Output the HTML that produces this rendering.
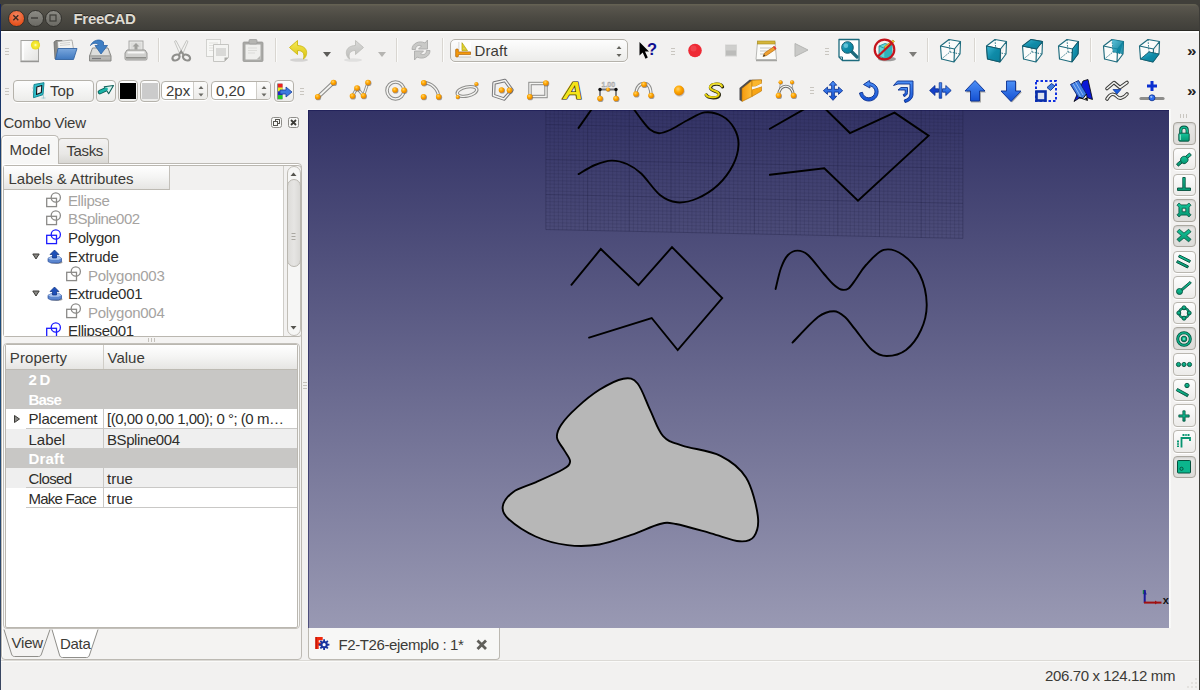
<!DOCTYPE html>
<html><head><meta charset="utf-8"><title>FreeCAD</title>
<style>
*{box-sizing:border-box;margin:0;padding:0}
html,body{width:1200px;height:690px;overflow:hidden;background:#f2f1f0;font-family:"Liberation Sans",sans-serif;font-size:15px;color:#3c3b37}
.a{position:absolute}
.t{position:absolute;white-space:pre;line-height:18px;height:18px}
svg{position:absolute;overflow:visible}
#title{left:0;top:0;width:1200px;height:31px;background:#403f3a}
#titlein{left:1px;top:4px;width:1198px;height:27px;border-radius:5px 5px 0 0;background:linear-gradient(#646153 0,#646153 1px,#5a574e 2px,#4b4942 14px,#403f3a 25.500px,#2a2924 26.500px,#2a2924 27px)}
#leftedge{left:0;top:4px;width:1px;height:686px;background:linear-gradient(#14245a,#1c4a7a 30%,#1c4a7a 60%,#3a4660)}
#view{left:308px;top:110px;width:861px;height:518px;background:linear-gradient(#333366,#9999b3);overflow:hidden;box-shadow:inset 1px 1px 0 rgba(20,20,80,.55)}
.wb{position:absolute;top:9.7px;width:17px;height:17px;border-radius:50%;border:1px solid #33322e}
.btn{position:absolute;border:1px solid #b5b2ab;border-radius:4px;background:linear-gradient(#fdfdfd,#ececea);box-shadow:0 1px 0 #fff}
.sep{position:absolute;width:1px;height:24px;top:38px;background:#d9d6d1;border-right:1px solid #fbfbfa;box-sizing:content-box}
.hd{position:absolute;width:4px;height:7px;background:repeating-linear-gradient(#c9c6c0 0 1px,transparent 1px 3px)}
.gray{color:#a5a4a2}
.gl{position:absolute;height:1px;background:#c9c8c6}
</style></head><body>
<!-- TITLE -->
<div class="a" id="title"></div>
<div class="a" id="titlein"></div>
<div class="wb" style="left:7.800px;background:radial-gradient(circle at 50% 30%,#f58662,#e8541f 70%,#d44c1b)"></div>
<div class="wb" style="left:26.500px;background:linear-gradient(#8c8b85,#6a6963)"></div>
<div class="wb" style="left:45px;background:linear-gradient(#8c8b85,#6a6963)"></div>
<svg style="left:8.300px;top:10.400px" width="56" height="16" viewBox="0 0 56 16">
<path d="M5.3 5.3l5 5m0-5l-5 5" stroke="#3b2a22" stroke-width="1.4" fill="none"/>
<path d="M23 8h7" stroke="#3d3c38" stroke-width="1.4"/>
<rect x="42" y="5" width="6" height="6" fill="#7d7c76" stroke="#3d3c38" stroke-width="1.2"/>
</svg>
<div class="t" style="left:73.500px;top:10px;color:#dfdbd2;font-weight:bold;text-shadow:0 -1px 0 #2a2926;letter-spacing:-0.312px">FreeCAD</div>
<div class="a" style="left:1px;top:31px;width:1198px;height:2px;background:linear-gradient(#fff,#fbfbfa)"></div>
<!--TB1S-->
<svg width="0" height="0" style="left:0;top:0"><defs>
<linearGradient id="gPaper" x1="0" y1="0" x2="1" y2="1"><stop offset="0" stop-color="#fff"/><stop offset="1" stop-color="#e3e3e1"/></linearGradient>
<radialGradient id="gGlow"><stop offset="0" stop-color="#fffde0"/><stop offset=".35" stop-color="#f8ee3a"/><stop offset="1" stop-color="#e8d81c"/></radialGradient>
<linearGradient id="gFold" x1="0" y1="0" x2="0" y2="1"><stop offset="0" stop-color="#7aa7dd"/><stop offset="1" stop-color="#3f78bf"/></linearGradient>
<linearGradient id="gDrive" x1="0" y1="0" x2="0" y2="1"><stop offset="0" stop-color="#e9e9e7"/><stop offset="1" stop-color="#a9a9a6"/></linearGradient>
<linearGradient id="gYel" x1="0" y1="0" x2="0" y2="1"><stop offset="0" stop-color="#f6ea55"/><stop offset="1" stop-color="#d9c211"/></linearGradient>
<linearGradient id="gGry" x1="0" y1="0" x2="0" y2="1"><stop offset="0" stop-color="#d9d9d7"/><stop offset="1" stop-color="#bdbdbb"/></linearGradient>
<radialGradient id="gOr" cx=".4" cy=".35" r=".7"><stop offset="0" stop-color="#ffd070"/><stop offset=".45" stop-color="#ffa900"/><stop offset="1" stop-color="#e07b00"/></radialGradient>
<linearGradient id="gTeal" x1="0" y1="0" x2="1" y2="1"><stop offset="0" stop-color="#3fb6d3"/><stop offset=".5" stop-color="#0f8ba8"/><stop offset="1" stop-color="#0a7f9b"/></linearGradient>
<linearGradient id="gBlue" x1="0" y1="0" x2="0" y2="1"><stop offset="0" stop-color="#4d90f6"/><stop offset="1" stop-color="#1450d2"/></linearGradient>
<linearGradient id="gGreen" x1="0" y1="0" x2="0" y2="1"><stop offset="0" stop-color="#14c59a"/><stop offset="1" stop-color="#069571"/></linearGradient>
<g id="od"><circle r="2.900" cx=".6" cy=".7" fill="#5a5a58" opacity=".55"/><circle r="2.800" fill="url(#gOr)"/></g>
<g id="ods"><circle r="2.1" cx=".4" cy=".5" fill="#5a5a58" opacity=".5"/><circle r="2" fill="url(#gOr)"/></g>
<g id="cube"><path d="M2.5 8L16.5 11L16 24L3.5 21ZM2.5 8L11 1.5L22.5 3.5L16.5 11M22.5 3.5L22 16L16 24" fill="#fff" fill-opacity=".75" stroke="#1d6b7d" stroke-width="1.150" stroke-linejoin="round"/><path d="M11 1.5L12 14L3.5 21M12 14L22 16" fill="none" stroke="#1d6b7d" stroke-width=".9" stroke-dasharray="1.6 1.2"/></g>
</defs></svg>
<div class="hd" style="left:5px;top:48px"></div>
<!-- new -->
<svg style="left:17px;top:38px" width="24" height="24" viewBox="0 0 24 24"><rect x="4" y="2.5" width="17.5" height="20.5" fill="url(#gPaper)" stroke="#a3a3a0" stroke-width="1"/><path d="M3.5 23.7h18.5" stroke="#8c8c89" stroke-width="1"/><path d="M6 4v18" stroke="#fff" stroke-width="1.5"/><circle cx="18.5" cy="7" r="4.6" fill="url(#gGlow)"/></svg>
<!-- open -->
<svg style="left:53px;top:38px" width="24" height="24" viewBox="0 0 24 24"><path d="M1 4l2-1.5h6l1.5 1.5H19v17H2z" fill="#8b8b88" stroke="#6b6b68" stroke-width=".8"/><path d="M4.5 3.5l14.5-1.5l1.5 9H5z" fill="#f3f3f1" stroke="#9b9b98" stroke-width=".7"/><path d="M7 5.5l10-1M7 7.5l10-1" stroke="#c9c9c6" stroke-width=".8"/><path d="M2.5 21.5L5 10.5h19L20.5 21.5z" fill="url(#gFold)" stroke="#3465a4" stroke-width=".9" stroke-linejoin="round"/></svg>
<!-- save -->
<svg style="left:88px;top:38px" width="24" height="24" viewBox="0 0 24 24"><path d="M4.5 10h15.5l3 8v5H1.500v-5z" fill="url(#gDrive)" stroke="#8a8a87" stroke-width="1" stroke-linejoin="round"/><path d="M1.500 18h21.5" stroke="#8f8f8c" stroke-width=".8"/><path d="M4 20.500h9" stroke="#77777a" stroke-width="1.200"/><path d="M5.500 11h13.500l2 6h-17.500z" fill="#dededc"/><path d="M2.500 7.500c2-5 9-7.500 13-3.500l0 3.500h4l-6.500 8.500l-6-8.500h3.500c-1-3-5.500-3-8 0z" fill="#3f7fc4" stroke="#2b62a3" stroke-width=".8" stroke-linejoin="round"/></svg>
<!-- print -->
<svg style="left:124px;top:38px" width="24" height="24" viewBox="0 0 24 24"><rect x="5" y="3" width="14" height="10" fill="#ececea" stroke="#a3a3a0" stroke-width=".9"/><rect x="6.500" y="4.500" width="11" height="7" fill="#dcdcda"/><path d="M12 5l3.500 3.500h-2v3h-3v-3h-2z" fill="#9f9f9c"/><path d="M3 12h18l2 3v5.500c0 1-.5 1.500-1.500 1.500h-19c-1 0-1.500-.5-1.500-1.500v-5.500z" fill="#cfcfcd" stroke="#8f8f8c" stroke-width=".9" stroke-linejoin="round"/><path d="M3.500 14.500h17" stroke="#f7f7f6" stroke-width="2"/><path d="M2 19.800h20" stroke="#8f8f8c" stroke-width="1.600"/></svg>
<div class="sep" style="left:158px"></div>
<!-- cut -->
<svg style="left:169px;top:38px" width="24" height="24" viewBox="0 0 24 24"><path d="M7 2.500l6 11.500-2 2.500-5.500-13z" fill="#f3f3f1" stroke="#b9b9b6" stroke-width=".8"/><path d="M17.500 2.500l-6 11.500 2 2.500 5.500-13z" fill="#f3f3f1" stroke="#b9b9b6" stroke-width=".8"/><ellipse cx="7" cy="19.500" rx="3.800" ry="2.700" transform="rotate(-30 7 19.500)" fill="none" stroke="#8f8f8c" stroke-width="2.200"/><ellipse cx="17.500" cy="19.500" rx="3.800" ry="2.700" transform="rotate(30 17.500 19.500)" fill="none" stroke="#8f8f8c" stroke-width="2.200"/><path d="M10 16.500l2.200-3 2.200 3" stroke="#8f8f8c" stroke-width="2" fill="none"/></svg>
<!-- copy -->
<svg style="left:205px;top:38px" width="24" height="24" viewBox="0 0 24 24"><rect x="1.500" y="1.500" width="14" height="17" fill="#f7f7f5" stroke="#cfcfcc" stroke-width=".9"/><path d="M4 5h9M4 7.500h9M4 10h9M4 12.500h9" stroke="#dededb" stroke-width=".9"/><path d="M8.500 6.500h15v13l-4 4h-11z" fill="#f4f4f2" stroke="#bfbfbc" stroke-width=".9"/><rect x="11" y="10" width="10" height="8" fill="#d9d9d7"/><path d="M23.500 19.500h-4v4z" fill="#a9a9a6"/></svg>
<!-- paste -->
<svg style="left:241px;top:38px" width="24" height="24" viewBox="0 0 24 24"><rect x="2" y="4" width="20" height="19.500" rx="1" fill="#a9a9a6" stroke="#9a9a97" stroke-width=".8"/><rect x="4.500" y="6.500" width="15" height="15" fill="#efefed"/><rect x="8" y="1.500" width="8" height="4.500" rx="1" fill="#b5b5b2" stroke="#99999a" stroke-width=".7"/><path d="M7 10h9M7 12.500h9M7 15h7" stroke="#dcdcd9" stroke-width="1.200"/><path d="M19.500 17.500v4h-4z" fill="#b9b9b6"/></svg>
<div class="sep" style="left:275px"></div>
<!-- undo -->
<svg style="left:288px;top:38px" width="24" height="24" viewBox="0 0 24 24"><ellipse cx="11" cy="22" rx="9" ry="1.800" fill="#000" opacity=".12"/><path d="M9.500 2.500L1.500 9.500l8 7v-4c5 0 7.500 2.500 6 8.500 4.500-3 5.500-13-6-13.500z" fill="url(#gYel)" stroke="#cdb80e" stroke-width=".9" stroke-linejoin="round"/></svg>
<svg style="left:322px;top:50.500px" width="10" height="7" viewBox="0 0 10 7"><path d="M1 1h8l-4 5z" fill="#5d5c59"/></svg>
<!-- redo -->
<svg style="left:341px;top:38px" width="24" height="24" viewBox="0 0 24 24"><ellipse cx="12" cy="22" rx="9" ry="1.800" fill="#000" opacity=".07"/><path d="M14.500 2.500l8 7-8 7v-4c-5 0-7.500 2.500-6 8.500-4.500-3-5.500-13 6-13.500z" fill="url(#gGry)" stroke="#bdbdba" stroke-width=".9" stroke-linejoin="round"/></svg>
<svg style="left:377px;top:51px" width="10" height="7" viewBox="0 0 10 7"><path d="M1 1h8l-4 5z" fill="#b5b4b1"/></svg>
<div class="sep" style="left:396px"></div>
<!-- refresh -->
<svg style="left:408.700px;top:38px" width="24" height="24" viewBox="0 0 24 24"><path d="M3 11.500c0-6 7-9.500 13-6.500l2.500-3v9h-9l3-3c-3-1.500-6 0-6 3.500z" fill="#c9c9c7" stroke="#adadab" stroke-width=".9" stroke-linejoin="round"/><path d="M21 12.500c0 6-7 9.500-13 6.500l-2.500 3v-9h9l-3 3c3 1.500 6 0 6-3.500z" fill="#c9c9c7" stroke="#adadab" stroke-width=".9" stroke-linejoin="round"/></svg>
<div class="sep" style="left:442px"></div>
<!-- combo -->
<div class="btn" style="left:449.500px;top:39px;width:178.500px;height:22.500px;border-radius:5px"></div>
<svg style="left:455px;top:41px" width="17" height="17" viewBox="0 0 17 17"><rect x="3.400" y="1" width="12.600" height="15.300" fill="#fff"/><path d="M3.900 1v9" stroke="#c9c9c7" stroke-width=".8"/><path d="M3.400 16h12.600" stroke="#b5b5b3" stroke-width=".8"/><path d="M7 1.700v8h5.500z" fill="#f2e12a" stroke="#a89a0a" stroke-width=".7" stroke-linejoin="round"/><path d="M8.300 5.500v3h2z" fill="#fbf7b0" stroke="#a89a0a" stroke-width=".4"/><path d="M.7 8.500c0-.6 2.600-.6 2.600 0v2.400h12.200v2.700h-12.200v1.900c0 .6-2.600.6-2.600 0z" fill="#f59a0c" stroke="#a85f04" stroke-width=".7" stroke-linejoin="round"/></svg>
<div class="t" style="left:474.500px;top:42px;color:#3c3b37;letter-spacing:0.097px">Draft</div>
<svg style="left:615px;top:44px" width="8" height="14" viewBox="0 0 8 14"><path d="M1.500 5l2.500-3 2.500 3zM1.500 10l2.500 3 2.500-3z" fill="#66655f"/></svg>
<!-- whatsthis -->
<svg style="left:637px;top:40px" width="22" height="22" viewBox="0 0 22 22"><path d="M2.500 2l9.500 9.500h-4l2.800 6-2.300 1.200-2.800-6.200-3.200 3z" fill="#000"/><text x="10" y="14.500" font-family="Liberation Sans,sans-serif" font-weight="bold" font-size="16.500" fill="#101090">?</text></svg>
<div class="hd" style="left:671px;top:48px"></div>
<!-- record -->
<svg style="left:683px;top:38px" width="24" height="24" viewBox="0 0 24 24"><circle cx="12" cy="12.500" r="6.800" fill="#ee2a35"/><circle cx="10.500" cy="10.500" r="3" fill="#f4545c" opacity=".6"/></svg>
<!-- stop -->
<svg style="left:719px;top:38px" width="24" height="24" viewBox="0 0 24 24"><rect x="6.500" y="7" width="11" height="11" fill="#bcbcba" stroke="#d5d5d3" stroke-width="1"/><path d="M7 7.500h10v5h-10z" fill="#cfcfcd"/></svg>
<!-- edit macro -->
<svg style="left:754px;top:38px" width="24" height="24" viewBox="0 0 24 24"><path d="M2 22.500h21" stroke="#a5a5a2" stroke-width="1.500"/><path d="M3.500 4h17.500l1.500 17.500h-20.500z" fill="#fbfbf9" stroke="#b1b1ae" stroke-width=".9"/><rect x="3.500" y="3" width="17.500" height="3" fill="#d5b53a" stroke="#a68a1a" stroke-width=".6"/><path d="M6 10h11M6 13h8M6 16h6" stroke="#c5c5c2" stroke-width="1"/><path d="M9 18.500l1.500-3.500 9.500-6.500 2 2.500-9.500 6.500z" fill="#f0a030" stroke="#b06a10" stroke-width=".7"/><path d="M19 9l1.500-1 2 2.500-1.500 1z" fill="#e23b3b"/><path d="M9 18.500l1-2.200 1.300 1.600z" fill="#333"/></svg>
<!-- play -->
<svg style="left:789px;top:38px" width="24" height="24" viewBox="0 0 24 24"><path d="M6 5.500l13 6.500-13 6.500z" fill="#c9c9c7" stroke="#b5b5b3" stroke-width="1" stroke-linejoin="round"/></svg>
<div class="hd" style="left:825px;top:48px"></div>
<!-- zoom fit -->
<svg style="left:837px;top:38px" width="24" height="24" viewBox="0 0 24 24"><path d="M2 1.500h20v21h-16.500l-3.500-3.500z" fill="#fff" stroke="#1d6b7d" stroke-width="1.300" stroke-linejoin="round"/><path d="M2 19h3.500v3.500" fill="none" stroke="#1d6b7d" stroke-width="1"/><path d="M14.500 13.500l5.500 5.500" stroke="#1d6b7d" stroke-width="3.200" stroke-linecap="round"/><circle cx="10.500" cy="9.500" r="5.800" fill="url(#gTeal)" stroke="#14596a" stroke-width="1"/><circle cx="9" cy="7.800" r="2.200" fill="#7fd3e6" opacity=".7"/></svg>
<!-- no draw style -->
<svg style="left:873px;top:38px" width="24" height="24" viewBox="0 0 24 24"><ellipse cx="14" cy="21" rx="9" ry="2.300" fill="#000" opacity=".35"/><path d="M6 8l6-2.500 7 2v10l-7 3-6-2.500z" fill="#5fd6d6" stroke="#1d8a93" stroke-width=".8"/><path d="M6 8l6 2.500 7-3M12 10.500v10" stroke="#1d8a93" stroke-width=".8" fill="none"/><path d="M12 10.500l7-3v10l-7 3z" fill="#2fb3bb"/><path d="M11 9l9-7 1.500 1.500-8.500 7.500z" fill="#f3c530" stroke="#a8820a" stroke-width=".6"/><circle cx="11.500" cy="11.500" r="9.800" fill="none" stroke="#c4141c" stroke-width="2.200"/><path d="M4.800 18.500l14-13.500" stroke="#c4141c" stroke-width="2.200"/></svg>
<svg style="left:908px;top:51px" width="10" height="7" viewBox="0 0 10 7"><path d="M1 1h8l-4 5z" fill="#7d7c79"/></svg>
<div class="sep" style="left:927px"></div>
<!-- cubes -->
<svg style="left:938px;top:38px" width="24" height="24" viewBox="0 0 24 24"><use href="#cube"/></svg>
<div class="sep" style="left:974px"></div>
<svg style="left:984px;top:38px" width="24" height="24" viewBox="0 0 24 24"><use href="#cube"/><path d="M2.500 8L16.500 11L16 24L3.500 21Z" fill="url(#gTeal)" stroke="#14596a" stroke-width="1"/></svg>
<svg style="left:1020px;top:38px" width="24" height="24" viewBox="0 0 24 24"><use href="#cube"/><path d="M2.500 8L11 1.500L22.500 3.500L16.500 11Z" fill="url(#gTeal)" stroke="#14596a" stroke-width="1"/></svg>
<svg style="left:1056px;top:38px" width="24" height="24" viewBox="0 0 24 24"><use href="#cube"/><path d="M16.500 11L22.500 3.500L22 16L16 24Z" fill="url(#gTeal)" stroke="#14596a" stroke-width="1"/></svg>
<div class="sep" style="left:1090px"></div>
<svg style="left:1101px;top:38px" width="24" height="24" viewBox="0 0 24 24"><path d="M11 1.500L22.500 3.500L22 16L12 14Z" fill="url(#gTeal)"/><use href="#cube"/><path d="M11 1.500L22.500 3.500L22 16L12 14Z" fill="url(#gTeal)" opacity=".8"/></svg>
<svg style="left:1137px;top:38px" width="24" height="24" viewBox="0 0 24 24"><use href="#cube"/><path d="M3.500 21L12 14L22 16L16 24Z" fill="url(#gTeal)" stroke="#14596a" stroke-width=".8"/></svg>
<div class="t" style="left:1187px;top:43px;font-size:17px;font-weight:bold;color:#222;letter-spacing:-1px;transform:scale(1,.85)">»</div>
<!--TB1E-->
<!--TB2S-->
<div class="hd" style="left:5px;top:88px"></div>
<div class="btn" style="left:13px;top:79.500px;width:81px;height:22px"></div>
<svg style="left:31px;top:80px" width="17" height="20" viewBox="0 0 17 20"><path d="M3 4.500l10-1.800-1 12-9.500 3z" fill="#2fbfca" stroke="#1a8792" stroke-width="1" stroke-linejoin="round"/><path d="M5.800 7l5-1.500-.5 7-4.800 2z" fill="#f2f1f0" stroke="#15151a" stroke-width="1.100" stroke-linejoin="round"/><path d="M1 8h1.500M1 12h1.500M12.500 15v3.500M10.500 18h4" stroke="#8cc4cb" stroke-width=".7"/></svg>
<div class="t" style="left:50px;top:81.500px;color:#3c3b37">Top</div>
<div class="btn" style="left:96px;top:79.500px;width:20px;height:22px"></div>
<svg style="left:97px;top:83px" width="18" height="14" viewBox="0 0 18 14"><path d="M3 9L8.500 6.500" stroke="#0c5f58" stroke-width="4.600" stroke-linecap="round"/><path d="M7.300 3.700l9.200-1.200-4.800 8.200z" fill="#d9f2ee" stroke="#0c5f58" stroke-width="1.100" stroke-linejoin="round"/><path d="M3 9L9.500 6" stroke="#19b3a6" stroke-width="2.800" stroke-linecap="round"/></svg>
<div class="btn" style="left:118px;top:79.500px;width:20px;height:22px"></div>
<div class="a" style="left:120px;top:82.500px;width:16px;height:16px;background:#000"></div>
<div class="btn" style="left:140px;top:79.500px;width:20px;height:22px"></div>
<div class="a" style="left:142px;top:82.500px;width:16px;height:16px;background:#cbcbcb"></div>
<!-- spin1 -->
<div class="btn" style="left:161px;top:81px;width:47px;height:19px;background:#fff"></div>
<div class="a" style="left:192.500px;top:82px;width:14.500px;height:17px;border-left:1px solid #cfcdc8;background:linear-gradient(#fbfbfa,#ecebe9);border-radius:0 3px 3px 0"></div>
<div class="t" style="left:166px;top:81.500px">2px</div>
<svg style="left:196.500px;top:84px" width="8" height="14" viewBox="0 0 8 14"><path d="M1.500 5l2.500-3 2.500 3zM1.500 9.500l2.500 3 2.500-3z" fill="#6b6a65"/></svg>
<!-- spin2 -->
<div class="btn" style="left:211px;top:81px;width:60px;height:19px;background:#fff"></div>
<div class="a" style="left:256px;top:82px;width:14px;height:17px;border-left:1px solid #cfcdc8;background:linear-gradient(#fbfbfa,#ecebe9);border-radius:0 3px 3px 0"></div>
<div class="t" style="left:216px;top:81.500px">0,20</div>
<svg style="left:260px;top:84px" width="8" height="14" viewBox="0 0 8 14"><path d="M1.500 5l2.500-3 2.500 3zM1.500 9.500l2.500 3 2.500-3z" fill="#6b6a65"/></svg>
<div class="btn" style="left:274px;top:79.500px;width:20px;height:22px"></div>
<svg style="left:276px;top:83px" width="18" height="17" viewBox="0 0 18 17"><rect x="1" y=".5" width="5.500" height="16" fill="#8a8a8a"/><rect x="2" y=".8" width="4.500" height="3.800" fill="#e22"/><rect x="2" y="4.600" width="4.500" height="3.800" fill="#ee2"/><rect x="2" y="8.400" width="4.500" height="3.800" fill="#22c"/><rect x="2" y="12.200" width="4.500" height="3.800" fill="#2c2"/><path d="M4 7h6v-3l6 5-6 5v-3h-6z" fill="#3d7be0" stroke="#1a3f9a" stroke-width=".8" stroke-linejoin="round"/></svg>
<div class="hd" style="left:300px;top:88px"></div>
<!-- line -->
<svg style="left:313px;top:79px" width="24" height="24" viewBox="0 0 24 24"><path d="M5 18L20.500 3.500" stroke="#8d8d8b" stroke-width="4" stroke-linecap="round"/><path d="M5 18L20.500 3.500" stroke="#f4f4f2" stroke-width="1.800"/><use href="#od" x="4.700" y="17.700"/><use href="#od" x="20.500" y="3.500"/></svg>
<!-- wire -->
<svg style="left:348px;top:79px" width="24" height="24" viewBox="0 0 24 24"><path d="M4.500 17L9 9L15.500 16.700L20 3.500" fill="none" stroke="#8d8d8b" stroke-width="3" stroke-linejoin="round"/><path d="M4.500 17L9 9L15.500 16.700L20 3.500" fill="none" stroke="#f4f4f2" stroke-width="1.200"/><use href="#od" x="4.500" y="17"/><use href="#od" x="9" y="9"/><use href="#od" x="15.500" y="16.700"/><use href="#od" x="20" y="3.500"/></svg>
<!-- circle -->
<svg style="left:384px;top:79px" width="24" height="24" viewBox="0 0 24 24"><circle cx="11.500" cy="11.500" r="8.500" fill="none" stroke="#8d8d8b" stroke-width="3.600"/><circle cx="11.500" cy="11.500" r="8.500" fill="none" stroke="#f4f4f2" stroke-width="1.600"/><use href="#od" x="11" y="11"/><use href="#od" x="20" y="11.300"/></svg>
<!-- arc -->
<svg style="left:419px;top:79px" width="24" height="24" viewBox="0 0 24 24"><path d="M4.700 3.800C13 4 19 10 19.700 17.700" fill="none" stroke="#8d8d8b" stroke-width="3.400"/><path d="M4.700 3.800C13 4 19 10 19.700 17.700" fill="none" stroke="#f4f4f2" stroke-width="1.400"/><use href="#od" x="4.700" y="3.800"/><use href="#od" x="4.500" y="17.700"/><use href="#od" x="19.700" y="17.700"/></svg>
<!-- ellipse -->
<svg style="left:455px;top:79px" width="24" height="24" viewBox="0 0 24 24"><ellipse cx="12" cy="12.500" rx="10" ry="4.500" transform="rotate(-12 12 12.500)" fill="none" stroke="#8d8d8b" stroke-width="3.400"/><ellipse cx="12" cy="12.500" rx="10" ry="4.500" transform="rotate(-12 12 12.500)" fill="none" stroke="#f4f4f2" stroke-width="1.400"/><use href="#ods" x="21.300" y="5"/><use href="#ods" x="2.700" y="18"/></svg>
<!-- polygon -->
<svg style="left:490px;top:79px" width="24" height="24" viewBox="0 0 24 24"><path d="M4 4L15 1.500L22 11L14 20L3.500 16.500Z" fill="none" stroke="#77777a" stroke-width="3.400" stroke-linejoin="round"/><path d="M4 4L15 1.500L22 11L14 20L3.500 16.500Z" fill="none" stroke="#f4f4f2" stroke-width="1.400" stroke-linejoin="round"/><use href="#od" x="11.500" y="11"/><use href="#od" x="19.500" y="11.300"/></svg>
<!-- rect -->
<svg style="left:526px;top:79px" width="24" height="24" viewBox="0 0 24 24"><rect x="4" y="4.500" width="16" height="13" fill="none" stroke="#8d8d8b" stroke-width="3.400"/><rect x="4" y="4.500" width="16" height="13" fill="none" stroke="#f4f4f2" stroke-width="1.400"/><use href="#od" x="19.800" y="4"/><use href="#od" x="3.700" y="17.700"/></svg>
<!-- text -->
<svg style="left:561px;top:79px" width="24" height="24" viewBox="0 0 24 24"><text x="2" y="20" font-family="Liberation Sans,sans-serif" font-weight="bold" font-style="italic" font-size="23" fill="#f6e31a" stroke="#2a2400" stroke-width="1.200" paint-order="stroke" textLength="20" lengthAdjust="spacingAndGlyphs">A</text></svg>
<!-- dimension -->
<svg style="left:596px;top:79px" width="24" height="24" viewBox="0 0 24 24"><text x="5.500" y="7.500" font-family="Liberation Sans,sans-serif" font-weight="bold" font-size="7" fill="#d9d9d9" stroke="#9a9a9a" stroke-width=".4">1.00</text><path d="M4 10.500h16M4 10.500v9M20 10.500v9" stroke="#77777a" stroke-width="1.800" fill="none"/><circle cx="4" cy="10.500" r="1.700" fill="#111"/><circle cx="20" cy="10.500" r="1.700" fill="#111"/><use href="#ods" x="12" y="10.500"/><use href="#od" x="4" y="19.500"/><use href="#od" x="20" y="19.500"/></svg>
<!-- bspline -->
<svg style="left:632px;top:79px" width="24" height="24" viewBox="0 0 24 24"><path d="M4 15C4 8 8 4.500 12 4.500S19 8 19 16.500" fill="none" stroke="#8d8d8b" stroke-width="3.400"/><path d="M4 15C4 8 8 4.500 12 4.500S19 8 19 16.500" fill="none" stroke="#f4f4f2" stroke-width="1.400"/><use href="#od" x="4" y="15"/><use href="#od" x="12" y="5.500"/><use href="#od" x="19" y="16.500"/></svg>
<!-- point -->
<svg style="left:667px;top:79px" width="24" height="24" viewBox="0 0 24 24"><circle cx="12.500" cy="12.200" r="5.200" fill="#6a6a68" opacity=".4"/><circle cx="12" cy="11.500" r="5" fill="url(#gOr)"/></svg>
<!-- S -->
<svg style="left:702px;top:79px" width="24" height="24" viewBox="0 0 24 24"><g transform="translate(12 11.500) scale(.9 .86) translate(-12 -11.300)"><path d="M20.800 6.500C19.500 2 8.500 2.200 7.500 7.300C6.800 12 18.500 11.300 17.300 16C16.200 20.500 5 20 2.800 16" fill="none" stroke="#2b2a12" stroke-width="3.800" stroke-linecap="round" transform="translate(.6 .6)"/><path d="M20.800 6.500C19.500 2 8.500 2.200 7.500 7.300C6.800 12 18.500 11.300 17.300 16C16.200 20.500 5 20 2.800 16" fill="none" stroke="#e6d20a" stroke-width="2.300" stroke-linecap="round"/><path d="M20 5.800C18.500 2.800 9.500 3 8.300 7" fill="none" stroke="#fbf06a" stroke-width="1" stroke-linecap="round"/></g></svg>
<!-- facebinder -->
<svg style="left:738px;top:78px" width="24" height="24" viewBox="0 0 24 24"><defs><linearGradient id="gFb" x1="0" y1="0" x2="1" y2="0"><stop offset="0" stop-color="#f59b0e"/><stop offset="1" stop-color="#ffbf3a"/></linearGradient></defs><path d="M1.500 10L11.500 1.800h12v1.500l-9.500 6-10 1.200v13l-2.500-1.500z" fill="#4d4d4f"/><path d="M4 10.500L14 2.500v16L4 23.500z" fill="url(#gFb)" stroke="#b87204" stroke-width=".6" stroke-linejoin="round"/><path d="M14 2.200L23.500 1.800v3.700l-6 3H14z" fill="#fbb72e" stroke="#b87204" stroke-width=".6" stroke-linejoin="round"/><path d="M14 11.500l9.500-3v4.500L14 18.500z" fill="#f7a516" stroke="#b87204" stroke-width=".6" stroke-linejoin="round"/><path d="M14 8.500h3.500l6-3v3l-9.500 3z" fill="#f7f6f4"/></svg>
<!-- bezier -->
<svg style="left:773px;top:79px" width="24" height="24" viewBox="0 0 24 24"><path d="M5.500 16.500L7.500 3.200M20.500 16.500L19 3.200" stroke="#9a9a98" stroke-width=".9"/><path d="M5.500 16.500C6 4 19.500 4 20.500 16.500" fill="none" stroke="#6d6d6b" stroke-width="3"/><path d="M5.500 16.500C6 4 19.500 4 20.500 16.500" fill="none" stroke="#f4f4f2" stroke-width="1.200"/><use href="#ods" x="7.500" y="3.200"/><use href="#ods" x="19" y="3.200"/><use href="#od" x="5.500" y="16.500"/><use href="#od" x="20.500" y="16.500"/></svg>
<div class="hd" style="left:810px;top:87px"></div>
<!-- move -->
<svg style="left:821px;top:79px" width="24" height="24" viewBox="0 0 24 24"><g transform="translate(12 11.700) scale(.92) translate(-12 -12)"><path d="M12 1.500l4 4.500h-2.500v4.500h4.500v-2.500l4.500 4-4.500 4v-2.500h-4.500v4.500h2.500l-4 4.500-4-4.500h2.500v-4.500h-4.500v2.500l-4.500-4 4.500-4v2.500h4.500v-4.500h-2.500z" fill="url(#gBlue)" stroke="#0a2f8f" stroke-width=".9" stroke-linejoin="round"/></g></svg>
<!-- rotate -->
<svg style="left:857px;top:79px" width="24" height="24" viewBox="0 0 24 24"><path d="M12.500 1.500l-6 4 6.500 3.500-.3-2.300c3.500.8 5.500 3.300 5.300 6.300-.3 3.500-3 5.800-6.200 5.800-3.200 0-5.800-2.200-6.300-5.500l-3 .7c.8 4.800 4.700 8 9.300 8 5 0 9-3.700 9.300-8.700.3-4.800-3-8.800-8.300-9.700z" fill="url(#gBlue)" stroke="#0a2f8f" stroke-width=".9" stroke-linejoin="round"/></svg>
<!-- offset -->
<svg style="left:892px;top:79px" width="24" height="24" viewBox="0 0 24 24"><path d="M1.500 6.500l4-4.500h15.500v13c0 4-3 7.500-8 8.500l-.8-2.500c3.500-1 5.800-3 5.800-6v-10h-12z" fill="url(#gBlue)" stroke="#0a2f8f" stroke-width=".9" stroke-linejoin="round"/><path d="M6 11l3-2.500h6.500v5c0 2-1.500 3.500-3.500 4l-.8-2c1.500-.5 2-1 2-2v-2.500h-4.500z" fill="url(#gBlue)" stroke="#0a2f8f" stroke-width=".9" stroke-linejoin="round"/></svg>
<!-- trimex -->
<svg style="left:928px;top:79px" width="24" height="24" viewBox="0 0 24 24"><path d="M11.200 3.700h2.500v15.600h-2.500z" fill="url(#gBlue)" stroke="#0a2f8f" stroke-width=".7"/><path d="M1.600 11.500l5.400-5v3.300h3.500v3.400h-3.500v3.300z" fill="#1440c8" stroke="#0a2f8f" stroke-width=".8" stroke-linejoin="round"/><path d="M23.200 11.500l-5.400-5v3.300h-3.300v3.400h3.300v3.300z" fill="url(#gBlue)" stroke="#0a2f8f" stroke-width=".8" stroke-linejoin="round"/></svg>
<!-- upgrade -->
<svg style="left:963px;top:79px" width="24" height="24" viewBox="0 0 24 24"><path d="M13 22.500h-6v-10h-5l10-10.500 10 10.500h-5v10z" fill="#222" opacity=".35" transform="translate(1,1)"/><path d="M12 1.500l10 10.500h-5.500v10h-9v-10h-5.500z" fill="url(#gBlue)" stroke="#0a2f8f" stroke-width=".9" stroke-linejoin="round"/></svg>
<!-- downgrade -->
<svg style="left:999px;top:79px" width="24" height="24" viewBox="0 0 24 24"><path d="M12 22.500l10-10.500h-5.500v-10h-9v10h-5.500z" fill="#222" opacity=".35" transform="translate(1,1)"/><path d="M12 22.500l10-10.500h-5.500v-10h-9v10h-5.500z" fill="url(#gBlue)" stroke="#0a2f8f" stroke-width=".9" stroke-linejoin="round"/></svg>
<!-- scale -->
<svg style="left:1034px;top:79px" width="24" height="24" viewBox="0 0 24 24"><rect x="2" y="2" width="20" height="20" fill="none" stroke="#1030e0" stroke-width="2" stroke-dasharray="2.500 2"/><rect x="2.500" y="12.500" width="9" height="9" fill="#dfe3ee" stroke="#0a2fa8" stroke-width="2.600"/><path d="M13 8.500l4.500-4 3.500 2.500-4.500 4.500z" fill="#3d7be0" stroke="#0a2f8f" stroke-width=".9"/></svg>
<!-- edit -->
<svg style="left:1069px;top:79px" width="24" height="24" viewBox="0 0 24 24"><path d="M14 2l5-1.500 4.500 20-10-3.500-8.500 5.500z" fill="#0a18d8" stroke="#000" stroke-width=".8"/><path d="M1.500 5.500l8-4 8 13.500-3.500 4.500-4.500-1z" fill="#3d7be0" stroke="#0a1f6f" stroke-width=".9" stroke-linejoin="round"/><path d="M4 4.500l7.500 13M6.500 3l7.500 13" stroke="#9cc0f5" stroke-width=".9"/><path d="M10 18.500l4 1 3.500-4.500 1 6.500z" fill="#f2f2f2" stroke="#000" stroke-width=".8"/><path d="M15.500 19.500l3 2-.5-3z" fill="#000"/></svg>
<!-- wire to bspline -->
<svg style="left:1105px;top:79px" width="24" height="24" viewBox="0 0 24 24"><path d="M2 9.500l7-6 6 5 7-5" fill="none" stroke="#3a3a38" stroke-width="3.600" stroke-linejoin="round" stroke-linecap="round"/><path d="M2 9.500l7-6 6 5 7-5" fill="none" stroke="#f4f4f2" stroke-width="1.600" stroke-linejoin="round" stroke-linecap="round"/><path d="M2 20c4-7 8-5 10-2.500s6 2.500 10-2.500" fill="none" stroke="#3a3a38" stroke-width="3.600" stroke-linecap="round"/><path d="M2 20c4-7 8-5 10-2.500s6 2.500 10-2.500" fill="none" stroke="#f4f4f2" stroke-width="1.600" stroke-linecap="round"/><path d="M8 10.500h8l-4 4.500z" fill="#1c5fe0" stroke="#0a2f8f" stroke-width=".7"/></svg>
<!-- add point -->
<svg style="left:1140px;top:79px" width="24" height="24" viewBox="0 0 24 24"><path d="M1 19.500h22" stroke="#8d8d8b" stroke-width="3.200" stroke-linecap="round"/><path d="M12 2v10M7 7h10" stroke="#0a2fd0" stroke-width="3"/><circle cx="12" cy="18.800" r="3" fill="#2c6cf0" stroke="#0a2f8f" stroke-width=".8"/><circle cx="11.300" cy="17.800" r="1.100" fill="#9cc0f5"/></svg>
<div class="t" style="left:1187px;top:83px;font-size:17px;font-weight:bold;color:#222;letter-spacing:-1px;transform:scale(1,.85)">»</div>
<div class="a" style="left:307px;top:109px;width:863px;height:1px;background:#fbfbfa"></div>
<!--TB2E-->
<!--LEFTS-->
<div class="t" style="left:3.500px;top:114px;color:#3c3b37;letter-spacing:-.25px">Combo View</div>
<!-- float/close buttons -->
<svg style="left:271px;top:117px" width="29" height="11" viewBox="0 0 29 11"><rect x=".5" y=".5" width="10" height="10" rx="2" fill="#f7f7f6" stroke="#8f8e8a" stroke-width="1"/><rect x="4.500" y="2.500" width="4" height="4" fill="none" stroke="#55544f" stroke-width="1"/><rect x="2.500" y="4.500" width="4" height="4" fill="#f7f7f6" stroke="#55544f" stroke-width="1"/><rect x="17.500" y=".5" width="10" height="10" rx="2" fill="#f7f7f6" stroke="#8f8e8a" stroke-width="1"/><path d="M20 3l5 5m0-5l-5 5" stroke="#3c3b37" stroke-width="1.800"/></svg>
<!-- tab pane -->
<div class="a" style="left:1px;top:163px;width:301px;height:497px;border:1px solid #bcb9b3;border-radius:0 4px 4px 4px;background:#f4f3f2;box-shadow:inset 1px 1px 0 #fff"></div>
<div class="a" style="left:58px;top:138px;width:51px;height:25px;border:1px solid #bcb9b2;border-bottom:none;border-radius:4px 4px 0 0;background:linear-gradient(#f3f2f1,#e9e8e6 60%,#d9d8d4)"></div>
<div class="a" style="left:1px;top:135px;width:58px;height:29px;box-shadow:inset 1px 1px 0 #fff;border:1px solid #bcb9b3;border-bottom:none;border-radius:5px 5px 0 0;background:#f7f7f6"></div>
<div class="t" style="left:9.500px;top:141px;color:#3c3b37">Model</div>
<div class="t" style="left:66.500px;top:142px;color:#3c3b37;letter-spacing:-.4px">Tasks</div>
<!-- tree -->
<div class="a" style="left:3px;top:165px;width:299px;height:171.500px;border:1px solid #bab7b0;border-radius:3px 4px 3px 3px;background:#f2f1f0"></div>
<div class="a" style="left:4px;top:190px;width:280px;height:145.500px;background:#fff;overflow:hidden" id="tree">
<svg style="left:42.3px;top:1.5px" width="16" height="16" viewBox="0 0 16 16"><circle cx="9.800" cy="5.500" r="4.600" fill="none" stroke="#8b8a88" stroke-width="1.300"/><rect x=".7" y="6.300" width="9.800" height="8.300" fill="none" stroke="#8b8a88" stroke-width="1.300"/></svg>
<div class="t" style="left:64.0px;top:2px;color:#a5a3a1;letter-spacing:-0.400px">Ellipse</div>
<svg style="left:42.3px;top:19.8px" width="16" height="16" viewBox="0 0 16 16"><circle cx="9.800" cy="5.500" r="4.600" fill="none" stroke="#8b8a88" stroke-width="1.300"/><rect x=".7" y="6.300" width="9.800" height="8.300" fill="none" stroke="#8b8a88" stroke-width="1.300"/></svg>
<div class="t" style="left:64.0px;top:20px;color:#a5a3a1;letter-spacing:-0.513px">BSpline002</div>
<svg style="left:42.3px;top:38.5px" width="16" height="16" viewBox="0 0 16 16"><circle cx="9.800" cy="5.500" r="4.600" fill="none" stroke="#1c1cff" stroke-width="1.300"/><rect x=".7" y="6.300" width="9.800" height="8.300" fill="none" stroke="#1c1cff" stroke-width="1.300"/></svg>
<div class="t" style="left:64.0px;top:39px;color:#2e2d2a;letter-spacing:-0.317px">Polygon</div>
<svg style="left:42.6px;top:59.1px" width="16" height="16" viewBox="0 0 16 16"><ellipse cx="9.500" cy="13.300" rx="6" ry="1.700" fill="#000" opacity=".4"/><path d="M1 9.300l4-2h6.500l3 2v3.200l-3 1.500h-7.500l-3-1.500z" fill="#5b86cf" stroke="#2c4f9a" stroke-width=".7"/><path d="M1 9.300l3 1.500h7.500l3-1.500-3-2h-6.500z" fill="#a9c3ee"/><path d="M7.500 1l4.500 4.500h-2.500v3.500h-4v-3.500h-2.500z" fill="#1d4fb8" stroke="#0c2f7f" stroke-width=".7" stroke-linejoin="round"/></svg>
<svg style="left:28.0px;top:63.0px" width="8" height="7" viewBox="0 0 8 7"><path d="M.8 1h6.400l-3.200 5z" fill="#8a8986" stroke="#3c3b37" stroke-width="1" stroke-linejoin="round"/></svg>
<div class="t" style="left:64.0px;top:58px;color:#2e2d2a;letter-spacing:-0.129px">Extrude</div>
<svg style="left:62.3px;top:76.3px" width="16" height="16" viewBox="0 0 16 16"><circle cx="9.800" cy="5.500" r="4.600" fill="none" stroke="#8b8a88" stroke-width="1.300"/><rect x=".7" y="6.300" width="9.800" height="8.300" fill="none" stroke="#8b8a88" stroke-width="1.300"/></svg>
<div class="t" style="left:84.0px;top:77px;color:#a5a3a1;letter-spacing:-0.273px">Polygon003</div>
<svg style="left:42.6px;top:96.3px" width="16" height="16" viewBox="0 0 16 16"><ellipse cx="9.500" cy="13.300" rx="6" ry="1.700" fill="#000" opacity=".4"/><path d="M1 9.300l4-2h6.500l3 2v3.200l-3 1.500h-7.500l-3-1.500z" fill="#5b86cf" stroke="#2c4f9a" stroke-width=".7"/><path d="M1 9.300l3 1.500h7.500l3-1.500-3-2h-6.500z" fill="#a9c3ee"/><path d="M7.500 1l4.500 4.500h-2.500v3.500h-4v-3.500h-2.500z" fill="#1d4fb8" stroke="#0c2f7f" stroke-width=".7" stroke-linejoin="round"/></svg>
<svg style="left:28.0px;top:100.2px" width="8" height="7" viewBox="0 0 8 7"><path d="M.8 1h6.400l-3.200 5z" fill="#8a8986" stroke="#3c3b37" stroke-width="1" stroke-linejoin="round"/></svg>
<div class="t" style="left:64.0px;top:95px;color:#2e2d2a;letter-spacing:-0.233px">Extrude001</div>
<svg style="left:62.3px;top:113.0px" width="16" height="16" viewBox="0 0 16 16"><circle cx="9.800" cy="5.500" r="4.600" fill="none" stroke="#8b8a88" stroke-width="1.300"/><rect x=".7" y="6.300" width="9.800" height="8.300" fill="none" stroke="#8b8a88" stroke-width="1.300"/></svg>
<div class="t" style="left:84.0px;top:114px;color:#a5a3a1;letter-spacing:-0.273px">Polygon004</div>
<svg style="left:42.3px;top:131.7px" width="16" height="16" viewBox="0 0 16 16"><circle cx="9.800" cy="5.500" r="4.600" fill="none" stroke="#1c1cff" stroke-width="1.300"/><rect x=".7" y="6.300" width="9.800" height="8.300" fill="none" stroke="#1c1cff" stroke-width="1.300"/></svg>
<div class="t" style="left:64.0px;top:132px;color:#2e2d2a;letter-spacing:-0.352px">Ellipse001</div>
</div>
<div class="a" style="left:4px;top:166px;width:166px;height:24px;background:linear-gradient(#ffffff,#f4f4f3 50%,#e6e5e3);border-right:1px solid #c3c0ba;border-bottom:1px solid #bdbab3"></div>
<div class="t" style="left:8.500px;top:170px;color:#3c3b37">Labels &amp; Attributes</div>
<!-- tree scrollbar -->
<div class="a" style="left:283px;top:166px;width:1px;height:170px;background:#cfcdc8"></div>
<div class="a" style="left:286.500px;top:165.500px;width:14px;height:170px;border:1px solid #c1beb7;border-radius:7px;background:#f6f6f5"></div>
<div class="a" style="left:286.500px;top:178.500px;width:14px;height:88px;border:1px solid #b9b6af;border-radius:7px;background:linear-gradient(90deg,#dddcd9,#e6e5e3 50%,#dad9d6)"></div>
<svg style="left:289px;top:171px" width="9" height="160" viewBox="0 0 9 160"><path d="M1.500 5l3-3.500 3 3.500z" fill="#55544f"/><path d="M1.500 155l3 3.500 3-3.500z" fill="#55544f"/><path d="M2.500 62.500h4M2.500 65.500h4M2.500 68.500h4" stroke="#aaa8a2" stroke-width="1"/></svg>
<!-- splitter grip -->
<svg style="left:147px;top:338px" width="10" height="4" viewBox="0 0 10 4"><path d="M1.500 0v4M4.500 0v4M7.500 0v4" stroke="#c4c1bb" stroke-width="1"/></svg>
<!-- property -->
<div class="a" style="left:3px;top:343px;width:297px;height:286px;border:1px solid #c3c0ba;border-radius:4px;background:#f9f9f8"></div><div class="a" style="left:5px;top:344px;width:293px;height:284px;border:1px solid #bab7b0;border-radius:2px;background:#fff"></div>
<div class="a" style="left:6px;top:345px;width:291px;height:24.500px;background:linear-gradient(#ffffff,#f4f4f3 50%,#e6e5e3);border-bottom:1px solid #bdbab3"></div>
<div class="a" style="left:103px;top:345px;width:1px;height:24px;background:#d0cdc7"></div>
<div class="t" style="left:9.800px;top:349px;color:#3c3b37;letter-spacing:0.088px">Property</div>
<div class="t" style="left:107.500px;top:349px;color:#3c3b37">Value</div>
<div class="a" style="left:6px;top:369.500px;width:291px;height:39px;background:#c8c7c5"></div>
<div class="a" style="left:6px;top:428.500px;width:291px;height:19.500px;background:#efefef"></div>
<div class="a" style="left:6px;top:448px;width:291px;height:20px;background:#c8c7c5"></div>
<div class="a" style="left:6px;top:468px;width:291px;height:19.500px;background:#efefef"></div>
<div class="gl" style="left:26px;top:428px;width:271px"></div>
<div class="gl" style="left:26px;top:447.500px;width:271px"></div>
<div class="gl" style="left:26px;top:487px;width:271px"></div>
<div class="gl" style="left:26px;top:506.500px;width:271px"></div>
<div class="a" style="left:103px;top:408.500px;width:1px;height:39.500px;background:#c9c8c6"></div>
<div class="a" style="left:103px;top:468px;width:1px;height:39px;background:#c9c8c6"></div>
<div class="t" style="left:28.500px;top:371px;color:#fff;font-weight:bold;letter-spacing:-0.817px">2 D</div>
<div class="t" style="left:28.500px;top:391px;color:#fff;font-weight:bold;letter-spacing:-0.817px">Base</div>
<div class="t" style="left:28.500px;top:410px;color:#2e2d2a;letter-spacing:-0.231px">Placement</div>
<div class="t" style="left:107px;top:410px;color:#2e2d2a;letter-spacing:-0.475px">[(0,00 0,00 1,00); 0 °; (0 m…</div>
<div class="t" style="left:28.500px;top:431px;color:#2e2d2a">Label</div>
<div class="t" style="left:107px;top:431px;color:#2e2d2a;letter-spacing:-0.414px">BSpline004</div>
<div class="t" style="left:28.500px;top:450px;color:#fff;font-weight:bold;letter-spacing:0.197px">Draft</div>
<div class="t" style="left:28.500px;top:470px;color:#2e2d2a;letter-spacing:-0.617px">Closed</div>
<div class="t" style="left:107px;top:470px;color:#2e2d2a">true</div>
<div class="t" style="left:28.500px;top:490px;color:#2e2d2a;letter-spacing:-0.745px">Make Face</div>
<div class="t" style="left:107px;top:490px;color:#2e2d2a">true</div>
<svg style="left:13px;top:414px" width="8" height="10" viewBox="0 0 8 10"><path d="M1.500 1.500l5 3.500-5 3.500z" fill="#8a8986" stroke="#3c3b37" stroke-width="1" stroke-linejoin="round"/></svg>
<!-- bottom tabs -->
<svg style="left:2px;top:627px" width="110" height="32" viewBox="0 0 110 32"><path d="M2 2.500L9.500 27c.6 1.800 1.500 2.500 3 2.500h24c1.500 0 2.400-.7 3-2.500L48 2.500" fill="#f4f3f2" stroke="#8f8e8a" stroke-width="1"/><path d="M50 2.500L57.500 28c.6 1.800 1.500 2.500 3 2.500h24c1.500 0 2.400-.7 3-2.500L96 2.500" fill="#fff" stroke="#8f8e8a" stroke-width="1"/></svg>
<div class="t" style="left:11.500px;top:633.500px;color:#3c3b37;letter-spacing:-.2px">View</div>
<div class="t" style="left:60px;top:634.500px;color:#3c3b37;letter-spacing:-.3px">Data</div>
<!-- dock splitter grip -->
<svg style="left:303px;top:381px" width="4" height="10" viewBox="0 0 4 10"><path d="M0 1.500h4M0 4.500h4M0 7.500h4" stroke="#c4c1bb" stroke-width="1"/></svg>
<!--LEFTE-->
<!-- VIEW -->
<div class="a" id="view">
<!--VIEWSVG--><svg style="left:0;top:0" width="861" height="518" viewBox="308 110 861 518">
<path d="M550.07 108V229.59M554.24 108V229.68M558.41 108V229.77M562.58 108V229.86M566.75 108V229.94M570.92 108V230.03M575.09 108V230.12M579.26 108V230.21M583.43 108V230.30M591.77 108V230.48M595.94 108V230.57M600.11 108V230.65M604.28 108V230.74M608.45 108V230.83M612.62 108V230.92M616.79 108V231.01M620.96 108V231.10M625.13 108V231.19M633.47 108V231.37M637.64 108V231.45M641.81 108V231.54M645.98 108V231.63M650.15 108V231.72M654.32 108V231.81M658.49 108V231.90M662.66 108V231.99M666.83 108V232.08M675.17 108V232.25M679.34 108V232.34M683.51 108V232.43M687.68 108V232.52M691.85 108V232.61M696.02 108V232.70M700.19 108V232.79M704.36 108V232.88M708.53 108V232.96M716.87 108V233.14M721.04 108V233.23M725.21 108V233.32M729.38 108V233.41M733.55 108V233.50M737.72 108V233.59M741.89 108V233.67M746.06 108V233.76M750.23 108V233.85M758.57 108V234.03M762.74 108V234.12M766.91 108V234.21M771.08 108V234.30M775.25 108V234.39M779.42 108V234.47M783.59 108V234.56M787.76 108V234.65M791.93 108V234.74M800.27 108V234.92M804.44 108V235.01M808.61 108V235.10M812.78 108V235.18M816.95 108V235.27M821.12 108V235.36M825.29 108V235.45M829.46 108V235.54M833.63 108V235.63M841.97 108V235.81M846.14 108V235.90M850.31 108V235.98M854.48 108V236.07M858.65 108V236.16M862.82 108V236.25M866.99 108V236.34M871.16 108V236.43M875.33 108V236.52M883.67 108V236.69M887.84 108V236.78M892.01 108V236.87M896.18 108V236.96M900.35 108V237.05M904.52 108V237.14M908.69 108V237.23M912.86 108V237.32M917.03 108V237.41M925.37 108V237.58M929.54 108V237.67M933.71 108V237.76M937.88 108V237.85M942.05 108V237.94M946.22 108V238.03M950.39 108V238.12M954.56 108V238.20M958.73 108V238.29M545.9 226.00L962.9 234.88M545.9 222.50L962.9 231.38M545.9 219.00L962.9 227.88M545.9 215.50L962.9 224.38M545.9 212.00L962.9 220.88M545.9 208.50L962.9 217.38M545.9 205.00L962.9 213.88M545.9 201.50L962.9 210.38M545.9 198.00L962.9 206.88M545.9 191.00L962.9 199.88M545.9 187.50L962.9 196.38M545.9 184.00L962.9 192.88M545.9 180.50L962.9 189.38M545.9 177.00L962.9 185.88M545.9 173.50L962.9 182.38M545.9 170.00L962.9 178.88M545.9 166.50L962.9 175.38M545.9 163.00L962.9 171.88M545.9 156.00L962.9 164.88M545.9 152.50L962.9 161.38M545.9 149.00L962.9 157.88M545.9 145.50L962.9 154.38M545.9 142.00L962.9 150.88M545.9 138.50L962.9 147.38M545.9 135.00L962.9 143.88M545.9 131.50L962.9 140.38M545.9 128.00L962.9 136.88M545.9 121.00L962.9 129.88M545.9 117.50L962.9 126.38M545.9 114.00L962.9 122.88M545.9 110.50L962.9 119.38M545.9 107.00L962.9 115.88" stroke="#1a1a3a" stroke-opacity=".2" stroke-width=".7" fill="none"/>
<path d="M545.90 108V229.50M587.60 108V230.39M629.30 108V231.28M671.00 108V232.16M712.70 108V233.05M754.40 108V233.94M796.10 108V234.83M837.80 108V235.72M879.50 108V236.61M921.20 108V237.49M962.90 108V238.38M545.9 229.50L962.9 238.38M545.9 194.50L962.9 203.38M545.9 159.50L962.9 168.38M545.9 124.50L962.9 133.38" stroke="#1a1a3a" stroke-opacity=".34" stroke-width=".9" fill="none"/>
<path d="M578.6 127.9L592.5 108.0M633.0 108.0C634.3 109.8 638.2 115.4 641.0 119.0C643.8 122.6 647.0 127.1 650.0 129.5C653.0 131.9 655.7 133.1 659.0 133.2C662.3 133.3 665.3 132.1 670.0 130.0C674.7 127.9 681.2 123.4 687.0 120.5C692.8 117.6 698.9 113.2 704.7 112.4C710.5 111.7 717.1 113.4 722.0 116.0C726.9 118.6 731.2 123.2 734.0 128.0C736.8 132.8 738.7 138.5 738.5 144.7C738.3 150.9 736.4 158.3 733.0 165.0C729.6 171.7 724.0 179.4 718.0 185.0C712.0 190.6 703.8 195.6 697.0 198.5C690.2 201.4 683.2 202.9 677.0 202.3C670.8 201.7 666.0 199.8 660.0 195.0C654.0 190.2 646.7 178.7 641.2 173.5C635.7 168.3 632.0 166.2 627.0 164.0C622.0 161.8 616.7 160.4 611.4 160.6C606.1 160.8 600.5 162.8 595.0 165.0C589.5 167.2 581.3 172.6 578.6 174.1" fill="none" stroke="#000" stroke-width="1.9" stroke-linecap="round"/>
<path d="M769.9 128.8L808.0 107.0M824.4 108.0L850.0 133.0L894.5 112.7L928.6 135.7L858.0 200.8L824.3 168.2L769.9 174.8" fill="none" stroke="#000" stroke-width="1.9" stroke-linejoin="miter" stroke-linecap="round"/>
<path d="M571.4 284.8L600.8 249.0L638.5 285.2L672.0 247.1L722.2 298.0L677.7 350.0L651.7 318.0L589.1 337.6" fill="none" stroke="#000" stroke-width="1.9" stroke-linejoin="miter" stroke-linecap="round"/>
<path d="M775.6 289.0C776.5 285.5 778.9 273.7 781.0 268.0C783.1 262.3 785.2 257.9 788.0 255.0C790.8 252.1 794.2 250.6 797.5 250.6C800.8 250.6 803.6 251.1 808.0 255.0C812.4 258.9 819.8 269.2 824.0 274.0C828.2 278.8 830.2 281.4 833.0 284.0C835.8 286.6 838.4 288.8 841.0 289.5C843.6 290.2 846.0 290.2 848.5 288.5C851.0 286.8 853.1 282.9 856.0 279.0C858.9 275.1 861.4 269.9 866.0 265.0C870.6 260.1 877.5 251.6 883.7 249.9C889.9 248.2 897.0 250.8 903.0 255.0C909.0 259.2 916.0 266.8 920.0 275.0C924.0 283.2 926.5 295.1 926.7 304.3C926.9 313.5 924.5 322.4 921.0 330.0C917.5 337.6 911.7 345.7 906.0 350.0C900.3 354.3 892.5 356.0 886.8 356.0C881.1 356.0 877.3 354.5 872.0 350.0C866.7 345.5 859.5 334.7 855.0 329.2C850.5 323.7 848.5 320.0 845.0 317.0C841.5 314.0 838.4 311.2 833.9 311.2C829.4 311.2 824.9 311.8 818.0 317.0C811.1 322.2 796.8 338.3 792.5 342.6" fill="none" stroke="#000" stroke-width="1.9" stroke-linecap="round"/>
<path d="M623.3 378.7C629.7 377.6 633.1 378.2 637.6 383.5C642.1 388.8 646.1 401.8 650.4 410.6C654.6 419.4 657.8 430.3 663.1 436.1C668.4 441.9 672.7 442.3 682.3 445.6C691.9 448.9 709.9 450.5 720.5 455.8C731.1 461.1 739.8 467.5 746.0 477.5C752.2 487.5 756.5 506.0 757.8 515.8C759.1 525.6 757.0 532.2 754.0 536.5C751.0 540.8 746.9 541.8 739.7 541.3C732.5 540.8 721.6 536.2 711.0 533.3C700.4 530.4 684.4 525.5 675.9 524.0C667.4 522.5 667.4 522.2 660.0 524.0C652.6 525.8 641.4 531.5 631.3 534.9C621.2 538.3 610.0 542.8 599.4 544.5C588.8 546.2 578.1 546.4 567.5 545.1C556.9 543.8 545.4 540.9 535.6 536.5C525.8 532.1 514.0 524.0 508.5 519.0C503.0 514.0 502.0 510.7 502.8 506.2C503.6 501.7 507.8 495.9 513.3 491.9C518.8 487.9 527.4 486.0 535.6 482.3C543.8 478.6 557.0 472.9 562.7 469.5C568.5 466.1 569.8 464.8 570.1 461.6C570.4 458.4 566.5 454.4 564.3 450.4C562.1 446.4 557.5 441.9 557.0 437.7C556.5 433.4 557.8 429.9 561.1 424.9C564.5 419.8 570.7 413.2 577.1 407.4C583.5 401.5 591.7 394.6 599.4 389.8C607.1 385.0 616.9 379.8 623.3 378.7Z" fill="#b7b7b7" stroke="#000" stroke-width="1.9"/>
<path d="M1143.600 590v4" stroke="#1a9a2a" stroke-width="1.600"/><path d="M1144.700 590V603" stroke="#1a1a9a" stroke-width="2"/><path d="M1144.700 589.500l2 5h-3z" fill="#1a1a9a"/><path d="M1144 602.600H1161.500" stroke="#a01010" stroke-width="2"/><path d="M1157.500 602.600l-2.500-2v4z" fill="#a01010"/>
<text x="1162.800" y="603.500" font-family="Liberation Sans,sans-serif" font-size="11" font-weight="bold" fill="#111">x</text>
</svg><!--VIEWEND-->
</div>
<div class="a" style="left:1169px;top:109px;width:2px;height:519px;background:linear-gradient(90deg,#fdfdfc,#f7f7f6)"></div>
<!--RIGHTS-->
<svg style="left:1179px;top:114px" width="9" height="4" viewBox="0 0 9 4"><path d="M1.500 0v4M4.500 0v4M7.500 0v4" stroke="#c9c6c0" stroke-width="1"/></svg>
<div class="btn" style="left:1172.500px;top:122.3px;width:23px;height:22.500px;background:linear-gradient(#e9e8e6,#dddcd9);border-color:#aaa79f;box-shadow:inset 0 1px 2px rgba(0,0,0,.12)"></div>
<svg style="left:1172px;top:121.5px" width="24" height="24" viewBox="0 0 24 24"><g transform="translate(12 13.2) scale(1) translate(-12 -12)"><path d="M8.800 10v-3c0-4 6.400-4 6.400 0v3" fill="none" stroke="#04503c" stroke-width="3.200"/><path d="M8.800 10v-3c0-4 6.400-4 6.400 0v3" fill="none" stroke="#12b890" stroke-width="1.600"/><rect x="6.800" y="10" width="10.400" height="8" rx="1" fill="url(#gGreen)" stroke="#04503c" stroke-width=".9" stroke-linejoin="round"/><path d="M8.300 11.300v5.500" stroke="#8be8cf" stroke-width="1.200"/></g></svg>
<div class="btn" style="left:1172.500px;top:147.9px;width:23px;height:22.500px;background:linear-gradient(#fdfdfd,#ecebe9);border-color:#b9b6af;box-shadow:0 1px 0 #fff"></div>
<svg style="left:1172px;top:147.1px" width="24" height="24" viewBox="0 0 24 24"><g><path d="M4.500 17l13-11 1.800 2.200-13 11z" fill="url(#gGreen)" stroke="#04503c" stroke-width=".9" stroke-linejoin="round"/><path d="M9 11c2-2.500 5-2 6.500 0s0 4.500-2.500 5.500-5.500-2.500-4-5.500z" fill="url(#gGreen)" stroke="#04503c" stroke-width=".9" stroke-linejoin="round"/></g></svg>
<div class="btn" style="left:1172.500px;top:173.6px;width:23px;height:22.500px;background:linear-gradient(#fdfdfd,#ecebe9);border-color:#b9b6af;box-shadow:0 1px 0 #fff"></div>
<svg style="left:1172px;top:172.8px" width="24" height="24" viewBox="0 0 24 24"><g><path d="M10.800 4.500h2.400v10.500h5.300v2.500h-13v-2.500h5.300z" fill="url(#gGreen)" stroke="#04503c" stroke-width=".9" stroke-linejoin="round"/></g></svg>
<div class="btn" style="left:1172.500px;top:199.2px;width:23px;height:22.500px;background:linear-gradient(#e9e8e6,#dddcd9);border-color:#aaa79f;box-shadow:inset 0 1px 2px rgba(0,0,0,.12)"></div>
<svg style="left:1172px;top:198.4px" width="24" height="24" viewBox="0 0 24 24"><g transform="translate(12 12) scale(0.88) translate(-12 -12)"><path d="M6.500 4l2.200 2.200h6.600l2.200-2.200 2.500 2.500-2.200 2.200v6.600l2.200 2.200-2.500 2.500-2.200-2.200h-6.600l-2.200 2.200-2.500-2.500 2.200-2.200v-6.600l-2.200-2.200zM10 10v4h4v-4z" fill-rule="evenodd" fill="url(#gGreen)" stroke="#04503c" stroke-width=".9" stroke-linejoin="round"/></g></svg>
<div class="btn" style="left:1172.500px;top:224.9px;width:23px;height:22.500px;background:linear-gradient(#e9e8e6,#dddcd9);border-color:#aaa79f;box-shadow:inset 0 1px 2px rgba(0,0,0,.12)"></div>
<svg style="left:1172px;top:224.1px" width="24" height="24" viewBox="0 0 24 24"><g transform="translate(12 12) scale(0.9) translate(-12 -12)"><path d="M6.800 4.500l5.200 4.300 5.200-4.300 2.600 2.800-4.800 4.200 4.800 4.200-2.600 2.800-5.200-4.300-5.200 4.300-2.600-2.800 4.800-4.200-4.800-4.200z" fill="url(#gGreen)" stroke="#04503c" stroke-width=".9" stroke-linejoin="round"/></g></svg>
<div class="btn" style="left:1172.500px;top:250.5px;width:23px;height:22.500px;background:linear-gradient(#fdfdfd,#ecebe9);border-color:#b9b6af;box-shadow:0 1px 0 #fff"></div>
<svg style="left:1172px;top:249.7px" width="24" height="24" viewBox="0 0 24 24"><g><path d="M7.500 5l11 5.500-1 2-11-5.500zM5.500 10.500l11 5.500-1 2-11-5.500z" fill="url(#gGreen)" stroke="#04503c" stroke-width=".9" stroke-linejoin="round"/></g></svg>
<div class="btn" style="left:1172.500px;top:276.1px;width:23px;height:22.500px;background:linear-gradient(#fdfdfd,#ecebe9);border-color:#b9b6af;box-shadow:0 1px 0 #fff"></div>
<svg style="left:1172px;top:275.3px" width="24" height="24" viewBox="0 0 24 24"><g><path d="M8 15l10-8.500 1.300 1.600-10 8.500z" fill="url(#gGreen)" stroke="#04503c" stroke-width=".9" stroke-linejoin="round"/><circle cx="7.500" cy="16.500" r="3" fill="url(#gGreen)" stroke="#04503c" stroke-width=".9" stroke-linejoin="round"/></g></svg>
<div class="btn" style="left:1172.500px;top:301.8px;width:23px;height:22.500px;background:linear-gradient(#fdfdfd,#ecebe9);border-color:#b9b6af;box-shadow:0 1px 0 #fff"></div>
<svg style="left:1172px;top:301.0px" width="24" height="24" viewBox="0 0 24 24"><g><circle cx="12" cy="12" r="4.800" fill="none" stroke="#04503c" stroke-width="2.600"/><circle cx="12" cy="12" r="4.800" fill="none" stroke="#0fae88" stroke-width="1.200"/><circle cx="12" cy="6.800" r="2" fill="url(#gGreen)" stroke="#04503c" stroke-width=".9" stroke-linejoin="round"/><circle cx="12" cy="17.200" r="2" fill="url(#gGreen)" stroke="#04503c" stroke-width=".9" stroke-linejoin="round"/><circle cx="6.800" cy="12" r="2" fill="url(#gGreen)" stroke="#04503c" stroke-width=".9" stroke-linejoin="round"/><circle cx="17.200" cy="12" r="2" fill="url(#gGreen)" stroke="#04503c" stroke-width=".9" stroke-linejoin="round"/></g></svg>
<div class="btn" style="left:1172.500px;top:327.4px;width:23px;height:22.500px;background:linear-gradient(#e9e8e6,#dddcd9);border-color:#aaa79f;box-shadow:inset 0 1px 2px rgba(0,0,0,.12)"></div>
<svg style="left:1172px;top:326.6px" width="24" height="24" viewBox="0 0 24 24"><g><circle cx="12" cy="12" r="6.300" fill="none" stroke="#04503c" stroke-width="3"/><circle cx="12" cy="12" r="6.300" fill="none" stroke="#0fae88" stroke-width="1.500"/><circle cx="12" cy="12" r="2.800" fill="url(#gGreen)" stroke="#04503c" stroke-width=".9" stroke-linejoin="round"/><circle cx="12" cy="12" r="1" fill="#7fe3c8"/></g></svg>
<div class="btn" style="left:1172.500px;top:353.1px;width:23px;height:22.500px;background:linear-gradient(#fdfdfd,#ecebe9);border-color:#b9b6af;box-shadow:0 1px 0 #fff"></div>
<svg style="left:1172px;top:352.3px" width="24" height="24" viewBox="0 0 24 24"><g><circle cx="6.500" cy="12.500" r="2.100" fill="url(#gGreen)" stroke="#04503c" stroke-width=".9" stroke-linejoin="round"/><circle cx="12" cy="12.500" r="2.100" fill="url(#gGreen)" stroke="#04503c" stroke-width=".9" stroke-linejoin="round"/><circle cx="17.500" cy="12.500" r="2.100" fill="url(#gGreen)" stroke="#04503c" stroke-width=".9" stroke-linejoin="round"/></g></svg>
<div class="btn" style="left:1172.500px;top:378.7px;width:23px;height:22.500px;background:linear-gradient(#fdfdfd,#ecebe9);border-color:#b9b6af;box-shadow:0 1px 0 #fff"></div>
<svg style="left:1172px;top:377.9px" width="24" height="24" viewBox="0 0 24 24"><g><path d="M5.500 10.500l11 6-1.200 2.200-11-6z" fill="url(#gGreen)" stroke="#04503c" stroke-width=".9" stroke-linejoin="round"/><circle cx="15" cy="7.500" r="2.200" fill="url(#gGreen)" stroke="#04503c" stroke-width=".9" stroke-linejoin="round"/></g></svg>
<div class="btn" style="left:1172.500px;top:404.3px;width:23px;height:22.500px;background:linear-gradient(#fdfdfd,#ecebe9);border-color:#b9b6af;box-shadow:0 1px 0 #fff"></div>
<svg style="left:1172px;top:403.5px" width="24" height="24" viewBox="0 0 24 24"><g transform="translate(12 12) scale(0.86) translate(-12 -12)"><path d="M10.700 6h2.600v4.700h4.700v2.600h-4.700v4.700h-2.600v-4.700h-4.700v-2.600h4.700z" fill="url(#gGreen)" stroke="#04503c" stroke-width=".9" stroke-linejoin="round"/></g></svg>
<div class="btn" style="left:1172.500px;top:430.0px;width:23px;height:22.500px;background:linear-gradient(#fdfdfd,#ecebe9);border-color:#b9b6af;box-shadow:0 1px 0 #fff"></div>
<svg style="left:1172px;top:429.2px" width="24" height="24" viewBox="0 0 24 24"><g><path d="M9.500 18.500v-9.500h8.500v3" fill="none" stroke="#069571" stroke-width="1.800"/><path d="M6 11v7M5 12.500h2M5 15h2M5 17.500h2M10 6h8M11.500 5v2M14 5v2M16.500 5v2" stroke="#069571" stroke-width="1"/></g></svg>
<div class="btn" style="left:1172.500px;top:455.6px;width:23px;height:22.500px;background:linear-gradient(#e9e8e6,#dddcd9);border-color:#aaa79f;box-shadow:inset 0 1px 2px rgba(0,0,0,.12)"></div>
<svg style="left:1172px;top:454.8px" width="24" height="24" viewBox="0 0 24 24"><g><rect x="5.500" y="5.500" width="13" height="12.500" rx=".8" fill="#0bb58c" stroke="#04503c" stroke-width="1"/><circle cx="9.500" cy="13.800" r="1.600" fill="#0bb58c" stroke="#04503c" stroke-width=".9"/></g></svg>
<div class="a" style="left:1199px;top:4px;width:1px;height:686px;background:#3d3c38"></div>
<!--RIGHTE-->
<!--BOTTOMS-->
<!-- mdi tab -->
<div class="a" style="left:308px;top:628px;width:191.500px;height:32px;border:1px solid #bcb9b2;border-top:none;border-radius:0 0 4px 4px;background:#f7f7f6"></div>
<svg style="left:314px;top:635px" width="16" height="16" viewBox="0 0 16 16"><path d="M1.400 2h7.300v3.200h-4v2.300h3v3h-3v3.500h-3.300z" fill="#f0280e"/><path d="M1.400 2h1.600v12h-1.600z" fill="#c81a08"/><g transform="translate(10.100,9.700)"><path d="M5.33 -0.86L5.33 0.86L3.58 0.95L3.20 1.86L4.38 3.16L3.16 4.38L1.86 3.20L0.95 3.58L0.86 5.33L-0.86 5.33L-0.95 3.58L-1.86 3.20L-3.16 4.38L-4.38 3.16L-3.20 1.86L-3.58 0.95L-5.33 0.86L-5.33 -0.86L-3.58 -0.95L-3.20 -1.86L-4.38 -3.16L-3.16 -4.38L-1.86 -3.20L-0.95 -3.58L-0.86 -5.33L0.86 -5.33L0.95 -3.58L1.86 -3.20L3.16 -4.38L4.38 -3.16L3.20 -1.86L3.58 -0.95Z" fill="#1a34a0"/><circle r="1.600" fill="#fff"/></g></svg>
<div class="t" style="left:338.500px;top:636px;color:#3c3b37;letter-spacing:-0.398px">F2-T26-ejemplo : 1*</div>
<svg style="left:475px;top:638px" width="14" height="14" viewBox="0 0 14 14"><path d="M2.500 2.500l8.500 8.500m0-8.500l-8.500 8.500" stroke="#605f5a" stroke-width="2.800"/></svg>
<!-- status -->
<div class="a" style="left:1px;top:660px;width:1198px;height:1px;background:#dcdad6"></div><div class="a" style="left:1px;top:661px;width:1198px;height:1px;background:#fafaf9"></div>
<div class="t" style="left:1045px;top:666.500px;color:#3c3b37;letter-spacing:-0.375px">206.70 x 124.12 mm</div>
<svg style="left:1186px;top:677px" width="12" height="12" viewBox="0 0 12 12"><g fill="#d0cdc7"><circle cx="10" cy="2" r=".8"/><circle cx="10" cy="6" r=".8"/><circle cx="6" cy="6" r=".8"/><circle cx="10" cy="10" r=".8"/><circle cx="6" cy="10" r=".8"/><circle cx="2" cy="10" r=".8"/></g></svg>
<!--BOTTOME-->
<div class="a" id="leftedge"></div>
</body></html>
